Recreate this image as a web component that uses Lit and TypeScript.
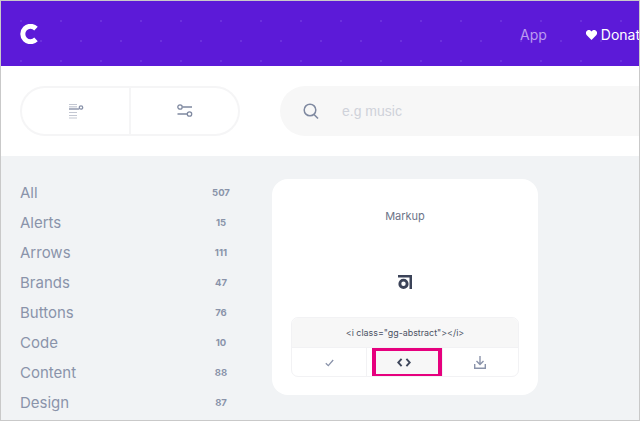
import { LitElement, html, css, svg } from "lit";
import { customElement } from "lit/decorators.js";

const CATS: [string, number][] = [
  ["All", 507], ["Alerts", 15], ["Arrows", 111], ["Brands", 47],
  ["Buttons", 76], ["Code", 10], ["Content", 88], ["Design", 87],
];

@customElement("app-root")
export class AppRoot extends LitElement {
  static styles = css`
    :host {
      display: block;
      width: 640px;
      height: 421px;
      overflow: hidden;
      font-family: Inter, "Liberation Sans", sans-serif;
    }
    .frame {
      box-sizing: border-box;
      width: 640px;
      height: 421px;
      border: 1px solid #c9c9c9;
      overflow: hidden;
      display: flex;
      flex-direction: column;
      background: #f1f3f5;
    }
    .head {
      flex: none;
      height: 65px;
      background-color: #5c1ad8;
      display: flex;
      align-items: center;
      padding: 0 0 0 19px;
      position: relative;
      overflow: hidden;
    }
    .dots {
      position: absolute;
      inset: 0;
      width: 100%;
      height: 100%;
    }
    .logo { position: relative; width: 18px; height: 20px; display: block; }
    .nav {
      position: relative;
      margin-left: auto;
      display: flex;
      align-items: center;
      gap: 39px;
      font-size: 14px;
      line-height: 20px;
      padding-top: 2px;
      white-space: nowrap;
      width: 119px;
      flex: none;
    }
    .app { color: #bb9bf0; }
    .donate { color: #fff; display: flex; align-items: center; gap: 4px; }
    .donate svg { width: 11px; height: 10px; flex: none; }
    .tools {
      flex: none;
      height: 90px;
      background: #fff;
      display: flex;
      align-items: center;
      padding: 0 0 0 19px;
      gap: 40px;
    }
    .pill {
      box-sizing: border-box;
      width: 220px;
      height: 50px;
      border: 2px solid #f5f5f6;
      border-radius: 25px;
      display: grid;
      grid-template-columns: 1fr 2px 1fr;
      flex: none;
    }
    .pill .sep { background: #f5f5f6; }
    .pill .cell { display: flex; align-items: center; justify-content: center; }
    .search {
      flex: 1;
      height: 50px;
      background: #f7f7f7;
      border-radius: 25px 0 0 25px;
      display: flex;
      align-items: center;
      padding-left: 23px;
      gap: 23px;
      color: #cfd2da;
      font-family: "Liberation Sans", Arial, sans-serif;
      font-size: 14px;
    }
    .body {
      flex: 1;
      display: flex;
      padding: 23px 0 0 19px;
      min-height: 0;
    }
    .side { width: 212px; flex: none; margin-top: -2px; }
    .row {
      height: 30px;
      display: flex;
      align-items: center;
      color: #8a93aa;
      font-size: 15px;
    }
    .row .n {
      margin-left: auto;
      margin-right: -9px;
      width: 40px;
      text-align: center;
      font-size: 9.5px;
      font-weight: 700;
      color: #8a93aa;
    }
    .card {
      margin-left: 40px;
      box-sizing: border-box;
      width: 266px;
      height: 216px;
      background: #fff;
      border-radius: 16px;
      padding: 30px 19px 18px;
      display: flex;
      flex-direction: column;
      flex: none;
    }
    .title { font-size: 11px; color: #6d7488; text-align: center; line-height: 14px; }
    .glyph { flex: 1; display: flex; align-items: center; justify-content: center; padding-top: 24px; }
    .box {
      height: 60px;
      box-sizing: border-box;
      border: 1px solid #f2f2f4;
      border-radius: 7px;
      overflow: hidden;
      flex: none;
    }
    .code {
      height: 29px;
      background: #f7f7f7;
      border-bottom: 1px solid #f2f2f4;
      display: flex;
      align-items: center;
      justify-content: center;
      font-size: 8.9px;
      color: #4b5264;
    }
    .btns { display: grid; grid-template-columns: repeat(3, 1fr); height: 29px; }
    .b { display: flex; align-items: center; justify-content: center; border-right: 1px solid #f2f2f4; position: relative; }
    .b:last-child { border-right: 0; }
    .b svg { position: relative; z-index: 1; }
    .mark {
      position: absolute;
      left: 5px;
      right: 0;
      top: 0;
      bottom: 0;
      box-sizing: border-box;
      border-style: solid;
      border-color: #e6007e;
      border-width: 3px 4px;
      background: #f7f7f7;
    }
  `;

  private dots() {
    const items = [];
    for (let y = 19; y <= 59; y += 20) {
      const off = y === 39 ? 39 : 19;
      for (let x = off; x < 640; x += 40) {
        items.push(svg`<rect x=${x} y=${y} width="2" height="2" fill="#6a30dd" />`);
      }
    }
    return html`<svg class="dots" viewBox="0 0 638 65" preserveAspectRatio="none">${items}</svg>`;
  }

  render() {
    return html`<div class="frame">
      <div class="head">
        ${this.dots()}
        <svg class="logo" viewBox="0 0 18 20">
          <path d="M16 4.6A8 8 0 0 0 10.5 2.3 7.7 7.7 0 1 0 10.5 17.7 8 8 0 0 0 16 15.4" fill="none" stroke="#fff" stroke-width="5" />
        </svg>
        <div class="nav">
          <span class="app">App</span>
          <span class="donate">
            <svg viewBox="0 0 11 10"><path d="M5.5 10 .8 5.2A2.9 2.9 0 0 1 5 1l.5.6.5-.6a2.9 2.9 0 0 1 4.2 4.2Z" fill="#fff" /></svg>
            Donate
          </span>
        </div>
      </div>
      <div class="tools">
        <div class="pill">
          <div class="cell">
            <svg width="16" height="16" viewBox="0 0 16 16" fill="none">
              <path d="M1 1.5h8M1 9.5h8M1 12.5h8M1 15h8" stroke="#c3c7d2" stroke-width="1.2" />
              <path d="M1 6h10" stroke="#8a93aa" stroke-width="1.4" />
              <path d="M1 3.8h8" stroke="#c3c7d2" stroke-width="1.2" />
              <circle cx="13" cy="4.5" r="1.7" stroke="#8a93aa" stroke-width="1.3" />
            </svg>
          </div>
          <div class="sep"></div>
          <div class="cell">
            <svg width="16" height="14" viewBox="0 0 16 14" fill="none" stroke="#7f89a0" stroke-width="1.3">
              <circle cx="3" cy="3" r="2.2" />
              <circle cx="12.5" cy="10" r="2.2" />
              <path d="M5.5 3H15M.5 10H10" />
            </svg>
          </div>
        </div>
        <div class="search">
          <svg width="16" height="17" viewBox="0 0 16 17" fill="none" stroke="#7f89a0" stroke-width="1.5">
            <circle cx="7" cy="7" r="5.8" />
            <path d="M11 11.4 15 15.6" />
          </svg>
          <span>e.g music</span>
        </div>
      </div>
      <div class="body">
        <div class="side">
          ${CATS.map(([n, c]) => html`<div class="row"><span>${n}</span><span class="n">${c}</span></div>`)}
        </div>
        <div class="card">
          <div class="title">Markup</div>
          <div class="glyph">
            <svg width="14" height="14" viewBox="0 0 14 14" fill="#3b4358">
              <path fill-rule="evenodd" d="M0 0H14V14H11.5V2.5H0ZM5.5 3.8a5 5 0 1 1 0 10.2 5 5 0 0 1 0-10.2ZM5.5 6.6a2.2 2.2 0 1 0 0 4.4 2.2 2.2 0 0 0 0-4.4Z" />
            </svg>
          </div>
          <div class="box">
            <div class="code">&lt;i class="gg-abstract"&gt;&lt;/i&gt;</div>
            <div class="btns">
              <div class="b">
                <svg width="9" height="8" viewBox="0 0 9 8" fill="none" stroke="#8a93aa" stroke-width="1.3"><path d="M.8 4.2 3.3 6.6 8.2 1" /></svg>
              </div>
              <div class="b">
                <div class="mark"></div>
                <svg width="14" height="9" viewBox="0 0 14 9" fill="none" stroke="#3f485c" stroke-width="1.9"><path d="M4.6 .8 1.2 4.5 4.6 8.2M9.4 .8l3.4 3.7-3.4 3.7" /></svg>
              </div>
              <div class="b">
                <svg width="12" height="13" viewBox="0 0 12 13" fill="none" stroke="#8a93aa" stroke-width="1.4"><path d="M6 0v8M2.5 5 6 8.5 9.5 5M.7 8v4.2h10.6V8" /></svg>
              </div>
            </div>
          </div>
        </div>
      </div>
    </div>`;
  }
}
